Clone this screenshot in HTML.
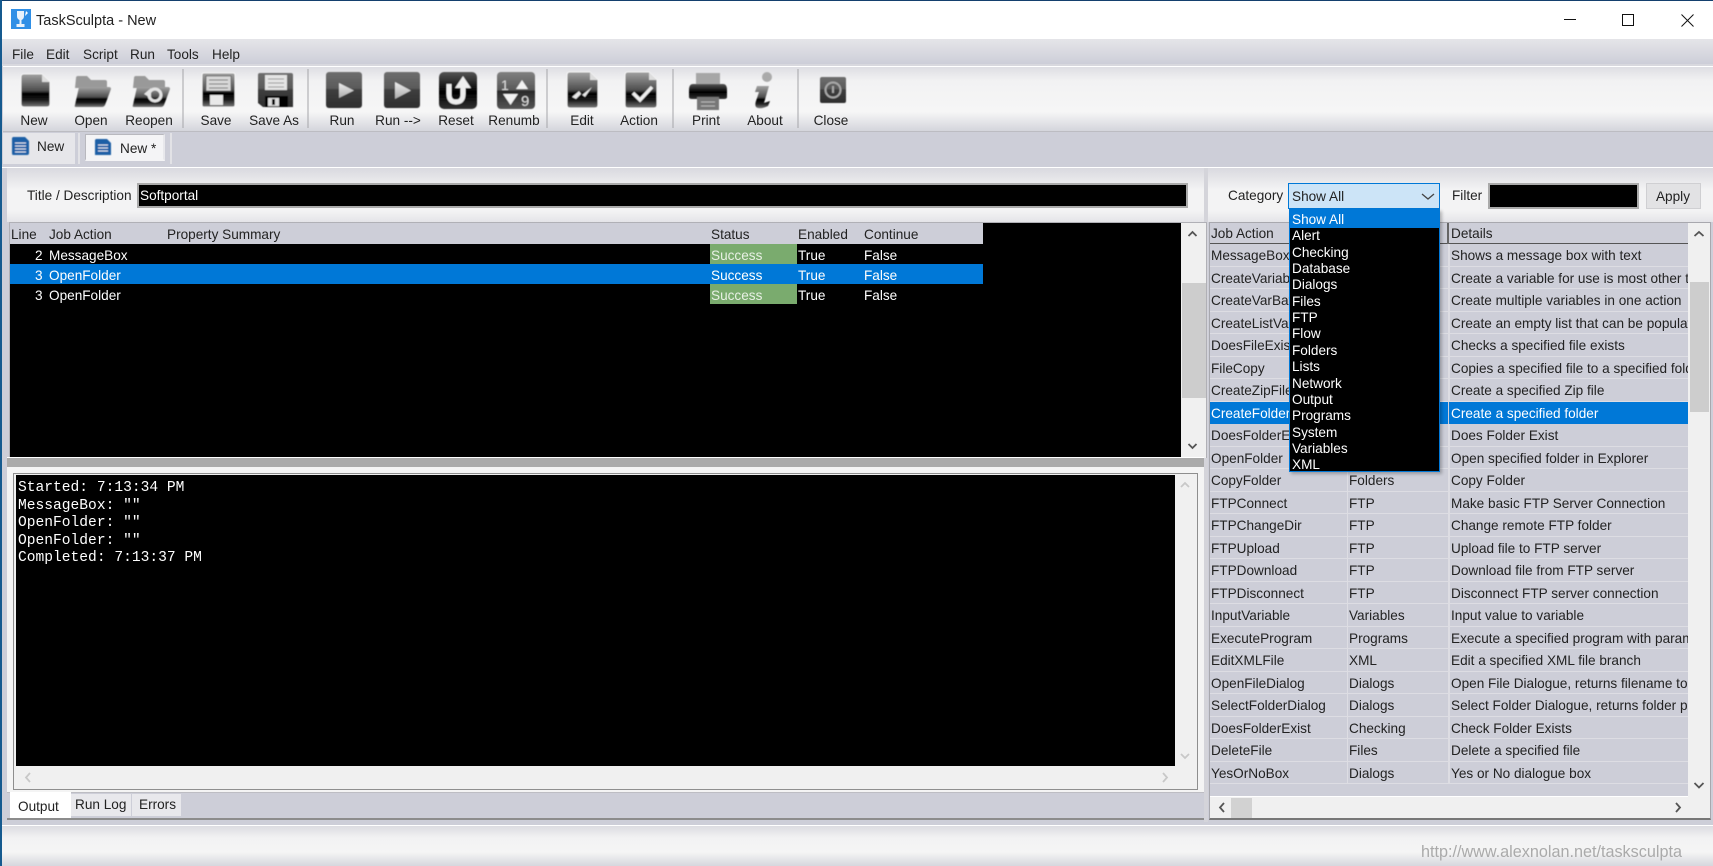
<!DOCTYPE html>
<html><head><meta charset="utf-8"><title>TaskSculpta - New</title>
<style>
html,body{margin:0;padding:0;width:1713px;height:866px;overflow:hidden;background:#cdced8}
div,span{position:absolute;box-sizing:border-box}
.t{white-space:nowrap;font:13.6px/20px "Liberation Sans",sans-serif;color:#222}
.c{text-align:center;width:80px}
.w{color:#fff}
.r{left:1210px;width:478px;height:22.5px;border-bottom:1px solid #dddde3;background:#cdced8}
.r span{top:2px;height:20px;overflow:hidden;white-space:nowrap;font:13.6px/20px "Liberation Sans",sans-serif;color:#222}
.r .a{left:1px;width:136px}.r .b{left:139px;width:96px}.r .d{left:241px;width:237px}
.q{position:absolute;left:137px;top:0;width:1px;height:100%;background:#dddde3}
.q2{position:absolute;left:238px;top:0;width:2px;height:100%;background:#dddde3}
.sel{background:#0078d7;border-bottom:none}.sel span{color:#fff}
.sel .q2{background:#cdced8;width:1px}
.li{left:2px;width:148px;height:16.35px;font:13.6px/18px "Liberation Sans",sans-serif;color:#fff;white-space:nowrap}
.lr{left:10px;width:973px;height:20px;color:#fff}
.lr span{top:2px;font:13.6px/20px "Liberation Sans",sans-serif;color:#fff;white-space:nowrap}
.m{font:14.6px/17.5px "Liberation Mono",monospace;color:#fff;left:18px;white-space:pre}
</style></head><body>
<!-- window chrome -->
<div style="left:0;top:0;width:1713px;height:39px;background:#fff"></div>
<div style="left:0;top:0;width:1713px;height:1px;background:#14406e"></div>
<div style="left:0;top:0;width:2px;height:866px;background:#155a8f;z-index:5"></div>
<div style="left:2px;top:39px;width:1711px;height:25px;background:linear-gradient(#e5e5e9,#cdced8)"></div>
<div style="left:2px;top:64px;width:1711px;height:2px;background:#d8d8de"></div>
<div style="left:3px;top:66px;width:1710px;height:66px;background:linear-gradient(#dedee3 0,#f2f2f3 22%,#f6f6f6 70%,#d4d5dc 100%);border-bottom:1px solid #bcbcc2;border-top:1px solid #fff"></div>
<div style="left:3px;top:133px;width:72px;height:31px;background:#e6e6ea"></div>
<div style="left:78px;top:133px;width:2px;height:31px;background:#e2e2e6"></div>
<div style="left:85px;top:134px;width:80px;height:27px;background:#f4f4f6;border:1px solid #b8b8be;border-right:2px solid #e8e8ec;border-bottom:2px solid #f4f4f6"></div>
<div style="left:170px;top:133px;width:2px;height:31px;background:#e2e2e6"></div>
<div style="left:2px;top:167px;width:1711px;height:1px;background:#fff"></div>
<!-- left panel -->
<div style="left:7px;top:168px;width:1200px;height:54px;background:linear-gradient(#d9d9df 0,#f3f3f4 40%,#f3f3f4 80%,#e4e4e8 100%)"></div>
<div style="left:1207px;top:168px;width:506px;height:54px;background:linear-gradient(#d9d9df 0,#f3f3f4 40%,#f3f3f4 80%,#e4e4e8 100%)"></div>
<div style="left:1204px;top:168px;width:4px;height:654px;background:#d4d4da"></div>
<div style="left:137px;top:183px;width:1051px;height:25px;background:#000;border:2px solid #aaa"></div>
<div class="t" style="left:27px;top:186px">Title / Description</div>
<div class="t w" style="left:140px;top:186px">Softportal</div>
<!-- job list -->
<div style="left:9px;top:222px;width:1198px;height:236px;background:#000;border:1px solid #b0b0b6;border-bottom:none"></div>
<div style="left:10px;top:223px;width:973px;height:21px;background:#cdced8"></div>
<div class="t" style="left:11px;top:225px">Line</div>
<div class="t" style="left:49px;top:225px">Job Action</div>
<div class="t" style="left:167px;top:225px">Property Summary</div>
<div class="t" style="left:711px;top:225px">Status</div>
<div class="t" style="left:798px;top:225px">Enabled</div>
<div class="t" style="left:864px;top:225px">Continue</div>
<div class="lr" style="top:244px"><span style="left:25px">2</span><span style="left:39px">MessageBox</span><span style="left:700px;top:0;width:87px;height:20px;background:#7aab6e"></span><span style="left:701px;color:#e8f0e4">Success</span><span style="left:788px">True</span><span style="left:854px">False</span></div>
<div class="lr" style="top:264px;background:#0078d7"><span style="left:25px">3</span><span style="left:39px">OpenFolder</span><span style="left:701px">Success</span><span style="left:788px">True</span><span style="left:854px">False</span></div>
<div class="lr" style="top:284px"><span style="left:25px">3</span><span style="left:39px">OpenFolder</span><span style="left:700px;top:0;width:87px;height:20px;background:#7aab6e"></span><span style="left:701px;color:#e8f0e4">Success</span><span style="left:788px">True</span><span style="left:854px">False</span></div>
<div style="left:1181px;top:223px;width:25px;height:235px;background:#f0f0f0"></div>
<div style="left:1182px;top:283px;width:24px;height:115px;background:#cdcdcd"></div>
<!-- splitter -->
<div style="left:7px;top:457px;width:1197px;height:1px;background:#fff"></div>
<div style="left:7px;top:458px;width:1197px;height:9px;background:#aaa"></div>
<div style="left:7px;top:467px;width:1197px;height:325px;background:#f4f4f4"></div>
<div style="left:13px;top:473px;width:1185px;height:317px;background:#f0f0f0;border:1px solid #8e8e8e"></div>
<div style="left:16px;top:475px;width:1159px;height:291px;background:#000"></div>
<div class="m" style="top:477px;margin-top:3px">Started: 7:13:34 PM</div>
<div class="m" style="top:495px;margin-top:3px">MessageBox: ""</div>
<div class="m" style="top:512px;margin-top:3px">OpenFolder: ""</div>
<div class="m" style="top:530px;margin-top:3px">OpenFolder: ""</div>
<div class="m" style="top:547px;margin-top:3px">Completed: 7:13:37 PM</div>
<!-- bottom tabs -->
<div style="left:7px;top:792px;width:1197px;height:28px;background:#cdced8;border-bottom:2px solid #8c8c8c"></div>
<div style="left:7px;top:792px;width:1197px;height:1px;background:#bdbdc3"></div>
<div style="left:10px;top:792px;width:61px;height:26px;background:#fff"></div>
<div style="left:71px;top:794px;width:60px;height:22px;background:#e8e8ec"></div>
<div style="left:132px;top:794px;width:49px;height:22px;background:#e8e8ec"></div>
<div class="t" style="left:18px;top:797px">Output</div>
<div class="t" style="left:75px;top:795px">Run Log</div>
<div class="t" style="left:139px;top:795px">Errors</div>
<!-- right panel -->
<div class="t" style="left:1228px;top:186px">Category</div>
<div class="t" style="left:1452px;top:186px">Filter</div>
<div style="left:1488px;top:183px;width:151px;height:26px;background:#000;border:2px solid #aaa"></div>
<div style="left:1646px;top:183px;width:55px;height:26px;background:#e2e2e4;border:1px solid #cfcfd2"></div>
<div class="t c" style="left:1633px;top:187px">Apply</div>
<!-- grid -->
<div style="left:1209px;top:222px;width:502px;height:598px;background:#f0f0f0;border:1px solid #a8a8ae;border-bottom:2px solid #777"></div>
<div style="left:1210px;top:223px;width:478px;height:573px;background:#cdced8"></div>
<div style="left:1210px;top:243px;width:478px;height:1px;background:#555"></div>
<div style="left:1447px;top:223px;width:2px;height:21px;background:#666"></div>
<div style="left:1210px;top:796px;width:478px;height:1px;background:#fff"></div>
<div class="t" style="left:1211px;top:224px">Job Action</div>
<div class="t" style="left:1451px;top:224px">Details</div>
<div style="left:1690px;top:282px;width:19px;height:130px;background:#cdcdcd"></div>
<div style="left:1231px;top:798px;width:21px;height:20px;background:#d2d2d2"></div>

<div class="r" style="top:244px"><i class="q"></i><i class="q2"></i><span class="a">MessageBox</span><span class="b">Alert</span><span class="d">Shows a message box with text</span></div>
<div class="r" style="top:266.5px"><i class="q"></i><i class="q2"></i><span class="a">CreateVariable</span><span class="b">Variables</span><span class="d">Create a variable for use is most other tasks</span></div>
<div class="r" style="top:289px"><i class="q"></i><i class="q2"></i><span class="a">CreateVarBatch</span><span class="b">Variables</span><span class="d">Create multiple variables in one action</span></div>
<div class="r" style="top:311.5px"><i class="q"></i><i class="q2"></i><span class="a">CreateListVar</span><span class="b">Lists</span><span class="d">Create an empty list that can be populated</span></div>
<div class="r" style="top:334px"><i class="q"></i><i class="q2"></i><span class="a">DoesFileExist</span><span class="b">Checking</span><span class="d">Checks a specified file exists</span></div>
<div class="r" style="top:356.5px"><i class="q"></i><i class="q2"></i><span class="a">FileCopy</span><span class="b">Files</span><span class="d">Copies a specified file to a specified folder</span></div>
<div class="r" style="top:379px"><i class="q"></i><i class="q2"></i><span class="a">CreateZipFile</span><span class="b">Files</span><span class="d">Create a specified Zip file</span></div>
<div class="r sel" style="top:401.5px"><i class="q2"></i><span class="a">CreateFolder</span><span class="b">Folders</span><span class="d">Create a specified folder</span></div>
<div class="r" style="top:424px"><i class="q"></i><i class="q2"></i><span class="a">DoesFolderExist</span><span class="b">Folders</span><span class="d">Does Folder Exist</span></div>
<div class="r" style="top:446.5px"><i class="q"></i><i class="q2"></i><span class="a">OpenFolder</span><span class="b">Folders</span><span class="d">Open specified folder in Explorer</span></div>
<div class="r" style="top:469px"><i class="q"></i><i class="q2"></i><span class="a">CopyFolder</span><span class="b">Folders</span><span class="d">Copy Folder</span></div>
<div class="r" style="top:491.5px"><i class="q"></i><i class="q2"></i><span class="a">FTPConnect</span><span class="b">FTP</span><span class="d">Make basic FTP Server Connection</span></div>
<div class="r" style="top:514px"><i class="q"></i><i class="q2"></i><span class="a">FTPChangeDir</span><span class="b">FTP</span><span class="d">Change remote FTP folder</span></div>
<div class="r" style="top:536.5px"><i class="q"></i><i class="q2"></i><span class="a">FTPUpload</span><span class="b">FTP</span><span class="d">Upload file to FTP server</span></div>
<div class="r" style="top:559px"><i class="q"></i><i class="q2"></i><span class="a">FTPDownload</span><span class="b">FTP</span><span class="d">Download file from FTP server</span></div>
<div class="r" style="top:581.5px"><i class="q"></i><i class="q2"></i><span class="a">FTPDisconnect</span><span class="b">FTP</span><span class="d">Disconnect FTP server connection</span></div>
<div class="r" style="top:604px"><i class="q"></i><i class="q2"></i><span class="a">InputVariable</span><span class="b">Variables</span><span class="d">Input value to variable</span></div>
<div class="r" style="top:626.5px"><i class="q"></i><i class="q2"></i><span class="a">ExecuteProgram</span><span class="b">Programs</span><span class="d">Execute a specified program with parameters</span></div>
<div class="r" style="top:649px"><i class="q"></i><i class="q2"></i><span class="a">EditXMLFile</span><span class="b">XML</span><span class="d">Edit a specified XML file branch</span></div>
<div class="r" style="top:671.5px"><i class="q"></i><i class="q2"></i><span class="a">OpenFileDialog</span><span class="b">Dialogs</span><span class="d">Open File Dialogue, returns filename to variable</span></div>
<div class="r" style="top:694px"><i class="q"></i><i class="q2"></i><span class="a">SelectFolderDialog</span><span class="b">Dialogs</span><span class="d">Select Folder Dialogue, returns folder path</span></div>
<div class="r" style="top:716.5px"><i class="q"></i><i class="q2"></i><span class="a">DoesFolderExist</span><span class="b">Checking</span><span class="d">Check Folder Exists</span></div>
<div class="r" style="top:739px"><i class="q"></i><i class="q2"></i><span class="a">DeleteFile</span><span class="b">Files</span><span class="d">Delete a specified file</span></div>
<div class="r" style="top:761.5px"><i class="q"></i><i class="q2"></i><span class="a">YesOrNoBox</span><span class="b">Dialogs</span><span class="d">Yes or No dialogue box</span></div>

<!-- combo and dropdown -->
<div style="left:1288px;top:183px;width:152px;height:26px;background:#cce4f7;border:1px solid #0078d7"></div>
<div class="t" style="left:1292px;top:187px">Show All</div>
<div style="left:1289px;top:209px;width:151px;height:263px;background:#000;border:1px solid #0078d7;box-shadow:2px 2px 3px rgba(0,0,0,.25);z-index:2">
<div style="left:0;top:0;width:149px;height:18px;background:#0078d7"></div>
<div class="li" style="top:1px">Show All</div>
<div class="li" style="top:17.3px">Alert</div>
<div class="li" style="top:33.7px">Checking</div>
<div class="li" style="top:50px">Database</div>
<div class="li" style="top:66.4px">Dialogs</div>
<div class="li" style="top:82.7px">Files</div>
<div class="li" style="top:99.1px">FTP</div>
<div class="li" style="top:115.4px">Flow</div>
<div class="li" style="top:131.8px">Folders</div>
<div class="li" style="top:148.1px">Lists</div>
<div class="li" style="top:164.5px">Network</div>
<div class="li" style="top:180.8px">Output</div>
<div class="li" style="top:197.2px">Programs</div>
<div class="li" style="top:213.5px">System</div>
<div class="li" style="top:229.9px">Variables</div>
<div class="li" style="top:246.2px">XML</div>
</div>
<!-- status bar -->
<div style="left:2px;top:825px;width:1711px;height:41px;background:linear-gradient(#dcdce1 0,#f2f2f3 30%,#f5f5f5 65%,#d6d7dd 100%);border-top:1px solid #fff"></div>
<div class="t" style="left:1421px;top:843px;color:#aaa;font-size:16.2px;line-height:18px">http://www.alexnolan.net/tasksculpta</div>
<!-- title & menu -->
<div class="t" style="left:36px;top:12px;font-size:14.5px;line-height:18px">TaskSculpta - New</div>
<div class="t" style="left:12px;top:45px">File</div>
<div class="t" style="left:46px;top:45px">Edit</div>
<div class="t" style="left:83px;top:45px">Script</div>
<div class="t" style="left:130px;top:45px">Run</div>
<div class="t" style="left:167px;top:45px">Tools</div>
<div class="t" style="left:212px;top:45px">Help</div>
<!-- toolbar labels -->
<div class="t c" style="left:-6px;top:111px">New</div>
<div class="t c" style="left:51px;top:111px">Open</div>
<div class="t c" style="left:109px;top:111px">Reopen</div>
<div class="t c" style="left:176px;top:111px">Save</div>
<div class="t c" style="left:234px;top:111px">Save As</div>
<div class="t c" style="left:302px;top:111px">Run</div>
<div class="t c" style="left:358px;top:111px">Run --&gt;</div>
<div class="t c" style="left:416px;top:111px">Reset</div>
<div class="t c" style="left:474px;top:111px">Renumb</div>
<div class="t c" style="left:542px;top:111px">Edit</div>
<div class="t c" style="left:599px;top:111px">Action</div>
<div class="t c" style="left:666px;top:111px">Print</div>
<div class="t c" style="left:725px;top:111px">About</div>
<div class="t c" style="left:791px;top:111px">Close</div>
<div class="t" style="left:37px;top:137px">New</div>
<div class="t" style="left:120px;top:139px">New *</div>
<!-- icons -->
<svg width="1713" height="866" viewBox="0 0 1713 866" style="position:absolute;left:0;top:0;z-index:1" fill="none">
<defs>
<linearGradient id="g" x1="0" y1="0" x2="0" y2="1"><stop offset="0" stop-color="#a2a2a2"/><stop offset=".5" stop-color="#4e4e4e"/><stop offset=".6" stop-color="#000"/><stop offset=".78" stop-color="#1a1a1a"/><stop offset="1" stop-color="#7c7c7c"/></linearGradient>
<linearGradient id="h" x1="0" y1="0" x2="0" y2="1"><stop offset="0" stop-color="#6e6e6e"/><stop offset=".45" stop-color="#5a5a5a"/><stop offset=".5" stop-color="#3e3e3e"/><stop offset="1" stop-color="#2e2e2e"/></linearGradient>
<linearGradient id="k" x1="0" y1="0" x2="0" y2="1"><stop offset="0" stop-color="#555"/><stop offset=".55" stop-color="#000"/><stop offset="1" stop-color="#333"/></linearGradient>
<linearGradient id="n" x1="0" y1="0" x2="0" y2="1"><stop offset="0" stop-color="#808080"/><stop offset=".48" stop-color="#5a5a5a"/><stop offset=".52" stop-color="#2a2a2a"/><stop offset="1" stop-color="#555"/></linearGradient>
<linearGradient id="p" x1="0" y1="0" x2="0" y2="1"><stop offset="0" stop-color="#eee"/><stop offset="1" stop-color="#aaa"/></linearGradient>
<filter id="b" x="-5%" y="-5%" width="110%" height="110%"><feGaussianBlur stdDeviation=".45"/></filter>
</defs>
<!-- logo -->
<rect x="11" y="9" width="20" height="20" fill="#2f8fe6"/>
<path d="M17 11h7v5q0 3-2.500 4v4h3v3h-8v-3h3v-4q-2.500-1-2.500-4z" fill="#e8f2fb"/><path d="M26 11l2 2-3 3z" fill="#fff"/>
<g filter="url(#b)">
<!-- New -->
<path d="M24 74H42L50 82V104Q50 107 47 107H24Q21 107 21 104V77Q21 74 24 74Z" fill="url(#g)" stroke="#fff" stroke-width=".8"/><path d="M42 74V82H50Z" fill="#ddd"/>
<!-- Open -->
<path d="M76 78Q76 76 78 76H87L91 80H105Q107 80 107 82V88H75Z" fill="#999"/>
<path d="M79 87H109Q111 87 111 89L105 105Q104 107 102 107H76Q74 107 75 105Z" fill="url(#g)"/>
<!-- Reopen -->
<path d="M134 78Q134 76 136 76H145L149 80H163Q165 80 165 82V88H133Z" fill="#999"/>
<path d="M137 87H168Q170 87 170 89L164 105Q163 107 161 107H134Q132 107 133 105Z" fill="url(#g)"/>
<circle cx="155" cy="95" r="6" stroke="#e4e4e4" stroke-width="3"/><path d="M144 94l7-6v10z" fill="#e4e4e4"/>
<!-- Save -->
<path d="M204 73H233Q235 73 235 75V105Q235 107 233 107H204Q202 107 202 105V75Q202 73 204 73Z" fill="url(#g)" stroke="#fff" stroke-width=".8"/>
<rect x="206" y="76" width="25" height="15" fill="#d8d8d8" stroke="#555" stroke-width=".7"/><path d="M209 80H228M209 84H228M209 88H228" stroke="#777" stroke-width="1"/>
<rect x="210" y="95" width="13" height="10" fill="#e8e8e8"/>
<!-- Save As -->
<path d="M260 73H291Q293 73 293 75V107H263L258 103V75Q258 73 260 73Z" fill="url(#h)"/>
<rect x="265" y="75" width="22" height="15" fill="#e4e4e4"/><path d="M268 79H284M268 83H284M268 87H284" stroke="#999" stroke-width="1"/>
<rect x="265" y="96" width="23" height="11" fill="#000"/><rect x="268" y="98" width="11" height="8" fill="#ddd"/><rect x="272" y="99" width="3" height="6" fill="#111"/>
<!-- Run -->
<rect x="326" y="72" width="36" height="36" rx="3" fill="url(#h)"/><path d="M339 83L354 90.500L339 98Z" fill="url(#p)"/>
<rect x="384" y="72" width="36" height="36" rx="3" fill="url(#h)"/><path d="M395 82L411 90.500L395 99Z" fill="url(#p)"/>
<!-- Reset -->
<rect x="439" y="72" width="38" height="37" rx="5" fill="url(#k)"/>
<path d="M449 84V94Q449 102 456 102Q463 102 463 94V86" stroke="#eee" stroke-width="5"/><path d="M455 88L463 76L471 88Z" fill="#eee"/>
<!-- Renumb -->
<rect x="497" y="72" width="38" height="37" rx="4" fill="url(#n)"/>
<text x="501" y="90" font-family="Liberation Sans,sans-serif" font-size="14" fill="#ddd">1</text>
<path d="M516 89L528 89L522 80Z" fill="#f2f2f2"/>
<path d="M503 94H518L510.500 105Z" fill="#f2f2f2"/>
<text x="521" y="106" font-family="Liberation Sans,sans-serif" font-size="15" fill="#ddd">9</text>
<!-- Edit -->
<path d="M570 72H590L598 80V105Q598 108 595 108H570Q567 108 567 105V75Q567 72 570 72Z" fill="url(#g)" stroke="#fff" stroke-width=".8"/><path d="M590 72V80H598Z" fill="#ddd"/>
<path d="M572 97L579 91L582 95L592 87L585 97L581 94L576 99Z" fill="#e8e8e8"/>
<!-- Action -->
<path d="M628 72H649L657 80V105Q657 108 654 108H628Q625 108 625 105V75Q625 72 628 72Z" fill="url(#g)" stroke="#fff" stroke-width=".8"/><path d="M649 72V80H657Z" fill="#ddd"/>
<path d="M633 93L640 100L652 87" stroke="#eee" stroke-width="3.500"/>
<!-- Print -->
<rect x="696" y="73" width="24" height="11" fill="#a6a6a6"/>
<path d="M693 84H723Q727 84 727 90V97Q727 99 724 99H692Q689 99 689 97V90Q689 84 693 84Z" fill="url(#k)"/>
<rect x="697" y="97" width="22" height="13" fill="#777"/><path d="M701 102H715M701 106H715" stroke="#bbb" stroke-width="1"/>
<!-- About -->
<circle cx="767" cy="77" r="5" fill="#aaa"/>
<path d="M757 86H769L764 103L770 101L768 106Q762 109 758 108Q754 107 756 101L759 92L755 92Z" fill="url(#g)"/>
<!-- Close -->
<rect x="820" y="77" width="26" height="26" rx="2" fill="url(#h)"/><circle cx="833" cy="90" r="7.500" stroke="#a8a8a8" stroke-width="2"/><path d="M833 86V93" stroke="#a8a8a8" stroke-width="2"/>
<!-- tab icons -->
<path d="M13 137H25L29 141V153Q29 155 27 155H13Q12 155 12 153V138Z" fill="#1e5fa6"/><path d="M15 143H26M15 146H26M15 149H26M15 152H26" stroke="#dfe9f4"/>
<path d="M96 139H107L111 143V155H95V140Z" fill="#1e5fa6"/><path d="M98 145H108M98 148H108M98 151H108" stroke="#dfe9f4"/>
</g>
<!-- separators -->
<path d="M183 69V128M308 69V128M547 69V128M673 69V128M798 69V128" stroke="#a5a5a9" stroke-width="1"/>
<!-- window controls -->
<path d="M1564 19.500H1576" stroke="#111"/><rect x="1622.500" y="14.500" width="11" height="11" stroke="#111"/><path d="M1681.500 14.500L1693.500 26.500M1693.500 14.500L1681.500 26.500" stroke="#111"/>
<!-- scroll arrows -->
<g stroke="#555" stroke-width="1.800">
<path d="M1188.500 236L1192.500 232L1196.500 236M1188.500 444L1192.500 448L1196.500 444"/>
<path d="M1694.500 236L1699 232L1703.500 236M1694.500 783L1699 787.500L1703.500 783"/>
<path d="M1224 803L1220 807.500L1224 812M1676 803L1680 807.500L1676 812"/>
</g>
<g stroke="#c8c8c8" stroke-width="1.800">
<path d="M1181 487L1185 483L1189 487M1181 754L1185 758L1189 754"/>
<path d="M30 773L26 777.500L30 782M1163 773L1167 777.500L1163 782"/>
</g>
<path d="M1422 194L1428 199L1434 194" stroke="#444" stroke-width="1.300"/>
</svg>
</body></html>
